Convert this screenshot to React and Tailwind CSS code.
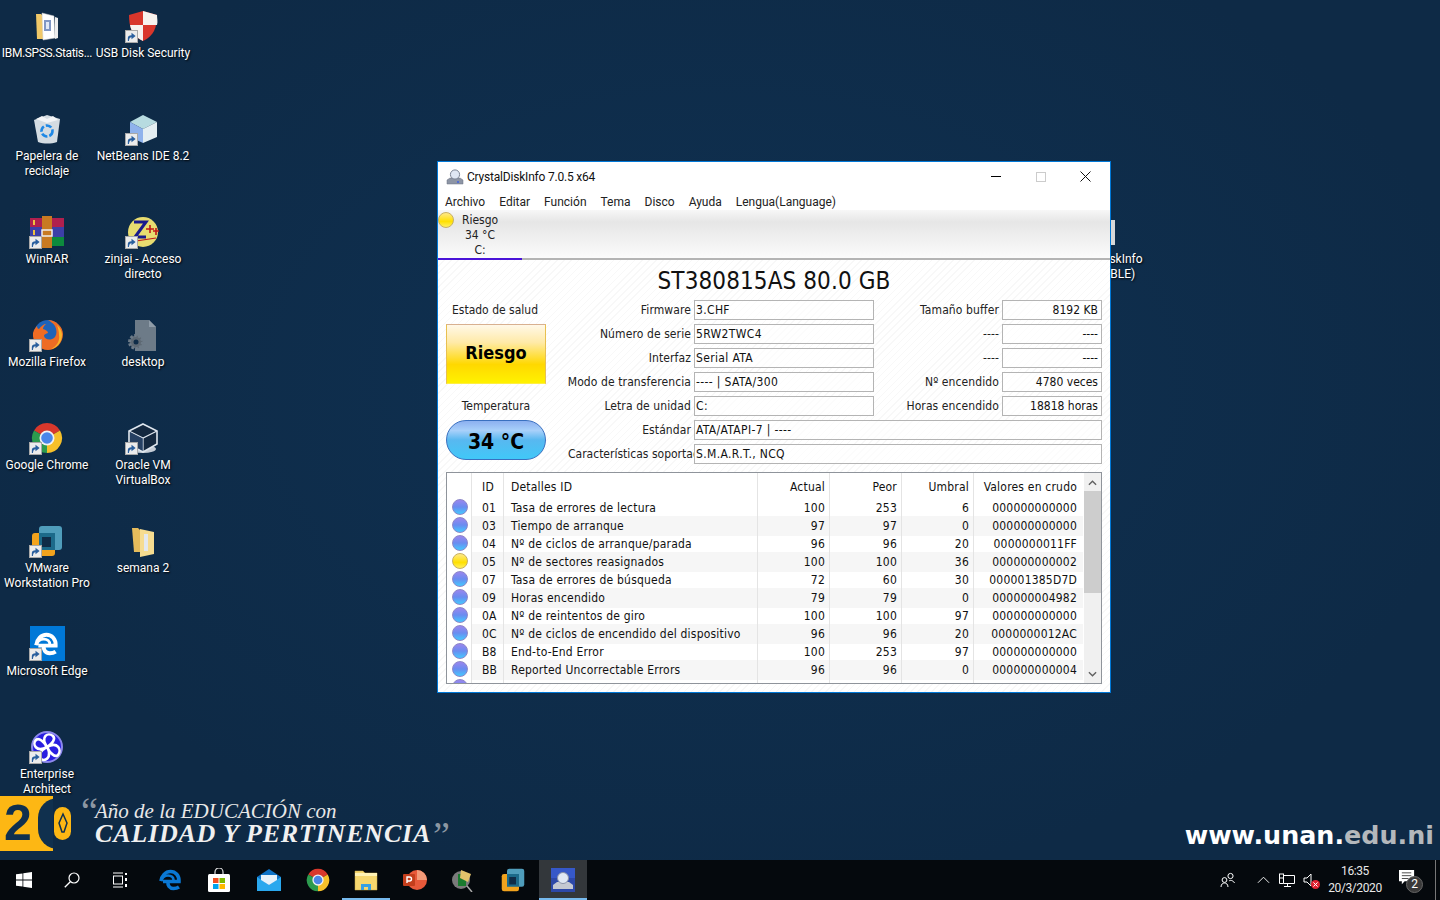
import React from "react";

const ui = "[font-family:'DejaVu_Sans_Condensed','Noto_Sans',sans-serif]";
const seg = "[font-family:'Roboto','Open_Sans',sans-serif]";

const Arrow = () => (
  <span className="absolute left-0 bottom-0 w-[13px] h-[13px] bg-[#ececec] border border-[#a8a8a8] flex items-center justify-center">
    <svg viewBox="0 0 12 12" className="w-[11px] h-[11px]"><path d="M2 11V7.500C2 5.500 3.500 4.500 6 4.500V2L10.500 5.500 6 9V6.800C4.500 6.800 3.500 7.500 3.200 11Z" fill="#2a5f9e" /></svg>
  </span>
);

const EdgeE = ({ s, c }) => (
  <svg viewBox="0 0 24 24" className={s}>
    <path d="M4 13.500h16c.3-6-3.500-10-8.500-10C6.500 3.500 2.500 8 2 13M9 13.500c-.5 4 1.500 7 5.500 7 2 0 4-.5 5.500-1.500" fill="none" stroke={c} strokeWidth="3.600" />
    <path d="M2 13c1-3 4-5.500 7-5.500 3.500 0 5.500 2 5.500 4.500" fill="none" stroke={c} strokeWidth="2.600" />
  </svg>
);

const FolderDoc = () => (
  <svg viewBox="0 0 32 32" className="w-8 h-8">
    <path d="M5 4h5l2 2v23H6z" fill="#f0c868" />
    <path d="M11 3l12 3 1 22-12 2z" fill="#fff" stroke="#cfcfcf" strokeWidth=".5" />
    <rect x="13" y="10" width="7" height="11" fill="#7f96c4" />
    <rect x="15" y="12" width="3" height="7" fill="#dfe7f5" />
    <path d="M24 7l3 1v20l-3 1z" fill="#eee" />
  </svg>
);
const Shield = () => (
  <svg viewBox="0 0 32 32" className="w-8 h-8">
    <path d="M16 1l14 4c0 12-3 21-14 26C5 26 2 17 2 5z" fill="#d9362b" />
    <path d="M16 1v14h14c1-3 0-7 0-10zM16 15H3c1 6 5 12 13 16z" fill="#f7f2ee" />
  </svg>
);
const Recycle = () => (
  <svg viewBox="0 0 32 32" className="w-8 h-8">
    <path d="M3 7l13-5 13 4-3 23c-6 2-13 2-19 0z" fill="#d4dce2" />
    <path d="M5 6l6-3 5 3 6-3 5 4-11 3z" fill="#f2f4f6" />
    <circle cx="16" cy="18" r="5.500" fill="none" stroke="#1e88e5" strokeWidth="2.600" strokeDasharray="6 2" />
  </svg>
);
const Cube = () => (
  <svg viewBox="0 0 32 32" className="w-8 h-8">
    <path d="M16 2l14 7-14 7L3 9z" fill="#b7dbe0" />
    <path d="M3 9l13 7v14L3 24z" fill="#8fb2ec" />
    <path d="M16 16l14-7v15l-14 6z" fill="#e4eef2" />
  </svg>
);
const WinRar = () => (
  <svg viewBox="0 0 36 32" className="w-9 h-8">
    <rect x="1" y="2" width="34" height="9" fill="#b0204e" />
    <rect x="1" y="11" width="34" height="10" fill="#3d3fa8" />
    <rect x="1" y="21" width="34" height="9" fill="#0d8a3d" />
    <rect x="4" y="4" width="2" height="5" fill="#f0c040" />
    <rect x="4" y="14" width="2" height="5" fill="#f0c040" />
    <rect x="13" y="0" width="10" height="32" fill="#c87a22" />
    <rect x="13" y="14" width="10" height="6" fill="none" stroke="#eee" strokeWidth="1.500" />
  </svg>
);
const Zinjai = () => (
  <svg viewBox="0 0 32 32" className="w-8 h-8">
    <circle cx="16" cy="16" r="15" fill="#e8dc70" />
    <path d="M7 6h12L8 21h11" fill="none" stroke="#1a1a8c" strokeWidth="3" />
    <path d="M19 13h8M23 9v8M26 15h6M29 12v7" stroke="#c01818" strokeWidth="1.600" />
    <path d="M9 25l20-3" stroke="#c01818" strokeWidth="1.200" />
  </svg>
);
const Firefox = () => (
  <svg viewBox="0 0 32 32" className="w-8 h-8">
    <circle cx="17" cy="15" r="14" fill="#1f63b8" />
    <path d="M17 1c8 0 15 7 15 14 0 9-7 16-15 16C8 31 1 23 2 14c1-4 3-6 4-7 0 2 1 3 2 3 2-3 5-5 7-5-2 2-3 3-3 5 3 1 5 2 5 4-2 1-4 1-4 3 1 4 7 5 11 1 2-3 2-7 0-11-2-3-4-4-7-6z" fill="#ee6c24" />
    <path d="M26 6c3 3 5 6 5 10 0 7-5 13-11 14 6-3 9-8 8-14 0-4-1-7-2-10z" fill="#f8b62a" />
  </svg>
);
const GearFile = () => (
  <svg viewBox="0 0 32 32" className="w-8 h-8">
    <path d="M8 1h14l7 7v24H8z" fill="#6d7b88" />
    <path d="M22 1l7 7h-7z" fill="#8f9ca8" />
    <circle cx="9" cy="23" r="6.500" fill="#5e6974" stroke="#6d7b88" strokeWidth="3" strokeDasharray="2.500 1.500" />
    <circle cx="9" cy="23" r="2.500" fill="#0f2c48" />
  </svg>
);
const Chrome = ({ s = "w-8 h-8" }) => (
  <svg viewBox="0 0 32 32" className={s}>
    <path d="M16 16L3 8.500A15 15 0 0 1 29 8.500Z" fill="#d8382c" />
    <path d="M16 16L29 8.500A15 15 0 0 1 16 31Z" fill="#f6c02a" />
    <path d="M16 16L16 31A15 15 0 0 1 3 8.500Z" fill="#2c9b4e" />
    <circle cx="16" cy="16" r="7.500" fill="#f2f2f2" />
    <circle cx="16" cy="16" r="5.800" fill="#4a86e8" />
  </svg>
);
const VBox = () => (
  <svg viewBox="0 0 32 32" className="w-8 h-8">
    <ellipse cx="16" cy="27" rx="13" ry="4" fill="#c4ccd6" />
    <path d="M16 2l14 7v13l-14 8-14-8V9z" fill="#14283f" stroke="#dfe6ee" strokeWidth="1.600" />
    <path d="M2 9l14 7 14-7M16 16v14" fill="none" stroke="#dfe6ee" strokeWidth="1.200" />
    <path d="M3 10l13 6.500V29L3 22z" fill="#2e4a72" opacity=".7" />
  </svg>
);
const VMware = ({ s = "w-8 h-8" }) => (
  <svg viewBox="0 0 32 32" className={s}>
    <rect x="8" y="1" width="23" height="24" rx="3" fill="#4f9dbb" />
    <rect x="1" y="8" width="23" height="23" rx="3" fill="#f2a31d" />
    <rect x="8" y="8" width="16" height="17" fill="#1c6a8a" />
    <rect x="11" y="12" width="9" height="10" fill="#0f2c48" />
  </svg>
);
const Folder = () => (
  <svg viewBox="0 0 32 32" className="w-8 h-8">
    <path d="M5 3h6l2 2v22H7z" fill="#e6bc5c" />
    <path d="M13 4l14 3v22l-14 3z" fill="#f6dc90" />
    <rect x="17" y="9" width="4" height="17" fill="#e4e8ee" />
  </svg>
);
const EdgeTile = () => (
  <div className="w-[35px] h-[35px] bg-[#0078d7] flex items-center justify-center">
    <EdgeE s="w-[26px] h-[26px]" c="#fff" />
  </div>
);
const EA = () => (
  <svg viewBox="0 0 34 34" className="w-[34px] h-[34px]">
    <circle cx="17" cy="17" r="15" fill="#2a1ee0" stroke="#8c88ec" strokeWidth="2" />
    <path d="M17 17C10 6 18 2 23 6c3 3-1 8-6 11zM17 17c11-6 15 3 11 8-3 3-8-2-11-8zM17 17C23 28 14 33 10 28c-3-3 2-8 7-11zM17 17C6 23 2 14 6 10c3-3 8 2 11 7z" fill="none" stroke="#fff" strokeWidth="2.600" />
  </svg>
);

const icons = [
  ["IBM.SPSS.Statis...", <FolderDoc />, false, "tracking-[-0.35px]"],
  ["USB Disk Security", <Shield />, true, "whitespace-nowrap"],
  ["Papelera de reciclaje", <Recycle />, false, ""],
  ["NetBeans IDE 8.2", <Cube />, true, "whitespace-nowrap"],
  ["WinRAR", <WinRar />, true, ""],
  ["zinjai - Acceso directo", <Zinjai />, true, ""],
  ["Mozilla Firefox", <Firefox />, true, ""],
  ["desktop", <GearFile />, false, ""],
  ["Google Chrome", <Chrome />, true, ""],
  ["Oracle VM VirtualBox", <VBox />, true, ""],
  ["VMware Workstation Pro", <VMware />, true, ""],
  ["semana 2", <Folder />, false, ""],
  ["Microsoft Edge", <EdgeTile />, true, ""],
  ["", null, false, ""],
  ["Enterprise Architect", <EA />, true, ""],
];

const DeskIcon = ({ label, icon, link, extra }) => (
  <div className={`flex flex-col items-center pt-[8px] text-white text-[12px] leading-[15px] text-center ${seg} [text-shadow:1px_1px_2px_#000]`}>
    <div className="relative w-[36px] h-[35px] flex items-center justify-center">
      {icon}
      {link && <Arrow />}
    </div>
    <div className={`mt-[3px] w-[96px] ${extra}`}>{label}</div>
  </div>
);

const Dot = ({ yellow }) => (
  <span className={`block w-[16px] h-[16px] rounded-full border ${yellow ? "border-[#c8b060] bg-[linear-gradient(#ffe98a,#ffe000_60%,#fff060)]" : "border-[#8c86c8] bg-[linear-gradient(#9a86ee,#6a8cf0_50%,#44c8ff)]"}`} />
);

const Field = ({ children, right, w = "w-[180px]" }) => (
  <div className={`h-[20px] ${w} shrink-0 border border-[#b4b4b4] bg-white/60 text-[12px] leading-[18px] text-[#111] whitespace-nowrap overflow-hidden ${right ? "text-right pr-[3px]" : "pl-[1px] tracking-[0.35px]"}`}>{children}</div>
);

const Label = ({ children, w = "w-[148px]" }) => (
  <div className={`${w} shrink-0 pr-[3px] text-right text-[12px] tracking-[0.1px] leading-[20px] text-[#222] whitespace-nowrap`}>{children}</div>
);

const rows3 = [
  ["Firmware", "3.CHF", "Tamaño buffer", "8192 KB"],
  ["Número de serie", "5RW2TWC4", "----", "----"],
  ["Interfaz", "Serial ATA", "----", "----"],
  ["Modo de transferencia", "---- | SATA/300", "Nº encendido", "4780 veces"],
  ["Letra de unidad", "C:", "Horas encendido", "18818 horas"],
];

const smart = [
  ["01", "Tasa de errores de lectura", "100", "253", "6", "000000000000"],
  ["03", "Tiempo de arranque", "97", "97", "0", "000000000000"],
  ["04", "Nº de ciclos de arranque/parada", "96", "96", "20", "0000000011FF"],
  ["05", "Nº de sectores reasignados", "100", "100", "36", "000000000002", true],
  ["07", "Tasa de errores de búsqueda", "72", "60", "30", "000001385D7D"],
  ["09", "Horas encendido", "79", "79", "0", "000000004982"],
  ["0A", "Nº de reintentos de giro", "100", "100", "97", "000000000000"],
  ["0C", "Nº de ciclos de encendido del dispositivo", "96", "96", "20", "0000000012AC"],
  ["B8", "End-to-End Error", "100", "253", "97", "000000000000"],
  ["BB", "Reported Uncorrectable Errors", "96", "96", "0", "000000000004"],
  ["", "", "", "", "", ""],
];

const cols = "grid grid-cols-[25px_32px_254px_72px_72px_72px_109px]";
const cell = "border-r border-[#e4e4e4] whitespace-nowrap overflow-hidden";

const SmartTable = () => (
  <div className="mt-[8px] h-[212px] w-[656px] border border-[#8f949b] flex overflow-hidden bg-white text-[12px] tracking-[0.2px] text-[#111]">
    <div className="w-[636px] shrink-0">
      <div className={`${cols} h-[25px] leading-[29px]`}>
        <div className={cell}></div>
        <div className={`${cell} pl-[10px]`}>ID</div>
        <div className={`${cell} pl-[7px]`}>Detalles ID</div>
        <div className={`${cell} text-right pr-[4px]`}>Actual</div>
        <div className={`${cell} text-right pr-[4px]`}>Peor</div>
        <div className={`${cell} text-right pr-[4px]`}>Umbral</div>
        <div className="text-right pr-[6px] whitespace-nowrap">Valores en crudo</div>
      </div>
      {smart.map((r, i) => (
        <div key={i} className={`${cols} h-[18px] leading-[20px]`}>
          <div className="border-r border-[#e4e4e4] pl-[5px] pt-[1px] bg-white"><Dot yellow={r[6]} /></div>
          <div className={`${cell} pl-[10px] ${i % 2 ? "bg-[#f6f6f6]" : ""}`}>{r[0]}</div>
          <div className={`${cell} pl-[7px] ${i % 2 ? "bg-[#f6f6f6]" : ""}`}>{r[1]}</div>
          <div className={`${cell} text-right pr-[4px] ${i % 2 ? "bg-[#f6f6f6]" : ""}`}>{r[2]}</div>
          <div className={`${cell} text-right pr-[4px] ${i % 2 ? "bg-[#f6f6f6]" : ""}`}>{r[3]}</div>
          <div className={`${cell} text-right pr-[4px] ${i % 2 ? "bg-[#f6f6f6]" : ""}`}>{r[4]}</div>
          <div className={`text-right pr-[6px] whitespace-nowrap ${i % 2 ? "bg-[#f6f6f6]" : ""}`}>{r[5]}</div>
        </div>
      ))}
    </div>
    <div className="w-[18px] ml-[1px] flex flex-col items-center bg-[#f0f0f0]">
      <svg viewBox="0 0 10 6" className="w-[9px] h-[6px] mt-[7px] mb-[5px]"><path d="M1 5l4-4 4 4" fill="none" stroke="#606060" strokeWidth="1.500" /></svg>
      <div className="w-full h-[102px] bg-[#cdcdcd]" />
      <div className="flex-1" />
      <svg viewBox="0 0 10 6" className="w-[9px] h-[6px] mb-[6px]"><path d="M1 1l4 4 4-4" fill="none" stroke="#606060" strokeWidth="1.500" /></svg>
    </div>
  </div>
);

const CrystalWindow = () => (
  <div className={`absolute left-[437px] top-[161px] w-[674px] h-[532px] border border-[#0078d7] bg-white flex flex-col ${ui}`}>
    <div className={`h-[28px] shrink-0 flex items-center pl-[8px] pt-[1px] text-[12px] text-[#111] ${seg}`}>
      <svg viewBox="0 0 18 18" className="w-[18px] h-[18px] mr-[3px]">
        <path d="M1 12l3-2h10l3 2v4H1z" fill="#8d95a5" stroke="#6a7080" strokeWidth=".5" />
        <circle cx="9" cy="6.500" r="4.600" fill="#dfe7f4" stroke="#7c8596" />
        <circle cx="12" cy="14" r="1" fill="#4060e0" />
      </svg>
      <span className="tracking-[-0.2px]">CrystalDiskInfo 7.0.5 x64</span>
      <div className="ml-auto flex items-center pr-[2px]">
        <div className="w-[45px] flex justify-center"><div className="w-[10px] h-[1px] bg-black" /></div>
        <div className="w-[45px] flex justify-center"><div className="w-[10px] h-[10px] border border-[#ccc]" /></div>
        <div className="w-[45px] flex justify-center">
          <svg viewBox="0 0 11 11" className="w-[11px] h-[11px]"><path d="M.5.5l10 10M10.500.5l-10 10" stroke="#111" /></svg>
        </div>
      </div>
    </div>
    <div className={`h-[20px] shrink-0 flex items-center gap-[14px] pl-[7px] pt-[4px] text-[12px] text-[#222] ${seg}`}>
      {["Archivo", "Editar", "Función", "Tema", "Disco", "Ayuda", "Lengua(Language)"].map((m) => <span key={m}>{m}</span>)}
    </div>
    <div className="h-[50px] shrink-0 bg-[linear-gradient(#f7f7f7,#e6e6e6_25%,#ededed_50%,#fbfbfb)] border-b-2 border-[#b4b4b4] relative">
      <div className="w-[84px] h-[50px] border-b-2 border-[#4a14d8] relative text-center text-[12px] leading-[15px] text-[#222] pt-[3px]">
        <span className="absolute left-0 top-[2px]"><Dot yellow /></span>
        <div>Riesgo</div>
        <div>34 °C</div>
        <div>C:</div>
      </div>
    </div>
    <div className="flex-1 pl-[8px] bg-[repeating-linear-gradient(135deg,#ffffff,#ffffff_4px,#f8f8f8_4px,#f8f8f8_5px)]">
      <div className="h-[40px] pr-[8px] text-center text-[24px] tracking-[0.1px] leading-[42px] text-[#111]">ST380815AS 80.0 GB</div>
      <div className="flex h-[164px]">
        <div className="w-[100px] shrink-0 flex flex-col items-center text-[12px] text-[#222]">
          <div className="leading-[20px] pr-[2px]">Estado de salud</div>
          <div className="mt-[4px] w-[100px] h-[60px] border border-[#d8b090] border-b-[#ffee44] border-x-[#e8c050] bg-[linear-gradient(#fff8e8,#ffeaa8_30%,#ffd800_68%,#fff200)] flex items-center justify-center pb-[3px] text-[18px] font-bold text-black">Riesgo</div>
          <div className="mt-[12px] leading-[20px]">Temperatura</div>
          <div className="mt-[4px] w-[100px] h-[40px] rounded-[20px] border border-[#3a70c0] bg-[linear-gradient(#8cb0f0,#a8d0fa_25%,#58b8f0_50%,#40c8f8)] flex items-center justify-center pt-[5px] text-[21px] font-bold text-black">34 °C</div>
        </div>
        <div className="flex flex-col gap-[4px]">
          {rows3.map((r) => (
            <div key={r[0]} className="flex">
              <Label>{r[0]}</Label>
              <Field>{r[1]}</Field>
              <Label w="w-[128px]">{r[2]}</Label>
              <Field right w="w-[100px]">{r[3]}</Field>
            </div>
          ))}
          <div className="flex">
            <Label>Estándar</Label>
            <Field w="w-[408px]">ATA/ATAPI-7 | ----</Field>
          </div>
          <div className="flex">
            <div className="w-[148px] shrink-0 pl-[22px] text-[12px] leading-[20px] text-[#222] whitespace-nowrap overflow-hidden">Características soportadas</div>
            <Field w="w-[408px]">S.M.A.R.T., NCQ</Field>
          </div>
        </div>
      </div>
      <SmartTable />
    </div>
  </div>
);

const Banner = () => (
  <div className="absolute left-0 top-[796px] w-[460px] h-[60px]">
    <div className="absolute left-0 top-0 w-[53px] h-[55px] bg-[#fdb714] overflow-hidden">
      <span className="absolute left-[4px] top-[-2px] text-[50px] leading-[58px] font-bold text-[#10304e] [font-family:'Liberation_Sans',sans-serif]">2</span>
      <span className="absolute left-[38px] top-[2px] w-[40px] h-[51px] rounded-full bg-[#10304e]"></span>
    </div>
    <span className="absolute left-[54px] top-[11px] w-[17px] h-[33px] rounded-full bg-[#fdb714] flex items-center justify-center">
      <svg viewBox="0 0 12 24" className="w-[12px] h-[24px]"><path d="M6 2l4 9-3 9H5L2 11z" fill="none" stroke="#10304e" strokeWidth="1.500" /></svg>
    </span>
    <span className="absolute left-[81px] top-[-9px] text-[38px] leading-[48px] text-[#8c97a3] [font-family:'Liberation_Serif',serif]">“</span>
    <span className="absolute left-[95px] top-[2px] text-[21px] leading-[26px] italic text-[#e8e8e8] whitespace-nowrap [font-family:'Liberation_Serif',serif]">Año de la EDUCACIÓN con</span>
    <span className="absolute left-[95px] top-[23px] text-[26px] tracking-[0.8px] leading-[30px] italic font-bold text-[#f0f0f0] whitespace-nowrap [font-family:'Liberation_Serif',serif]">CALIDAD Y PERTINENCIA</span>
    <span className="absolute left-[433px] top-[15px] text-[38px] leading-[48px] text-[#8c97a3] [font-family:'Liberation_Serif',serif]">”</span>
  </div>
);

const TaskIcon = ({ children, active, open, gap = "" }) => (
  <div className={`w-[48px] h-[40px] relative flex items-center justify-center ${gap} ${active ? "bg-[#33373b]" : ""}`}>
    {children}
    {open && <div className="absolute left-0 right-0 bottom-0 h-[2px] bg-[#76b9ed]" />}
  </div>
);

const Taskbar = () => (
  <div className="h-[40px] shrink-0 bg-[#05090d] flex items-center text-white">
    <TaskIcon>
      <svg viewBox="0 0 16 16" className="w-[16px] h-[16px]"><path d="M0 2.300l6.500-.9v6.200H0zM7.300 1.300L16 0v7.600H7.300zM0 8.400h6.500v6.200L0 13.700zM7.300 8.400H16V16l-8.700-1.200z" fill="#fff" /></svg>
    </TaskIcon>
    <TaskIcon>
      <svg viewBox="0 0 16 16" className="w-[16px] h-[16px]"><circle cx="10" cy="6" r="5" fill="none" stroke="#fff" strokeWidth="1.200" /><path d="M6.300 9.700L.8 15.200" stroke="#fff" strokeWidth="1.300" /></svg>
    </TaskIcon>
    <TaskIcon>
      <svg viewBox="0 0 16 16" className="w-[16px] h-[16px]"><path d="M1 1h10M1 15h10" stroke="#fff" /><rect x="1.500" y="4" width="9" height="8" fill="none" stroke="#fff" /><path d="M14 1v2M14 6v3M14 12v3" stroke="#fff" strokeWidth="2" /></svg>
    </TaskIcon>
    <TaskIcon gap="ml-[3px]"><EdgeE s="w-[24px] h-[24px]" c="#0a78d4" /></TaskIcon>
    <TaskIcon>
      <svg viewBox="0 0 24 24" className="w-[24px] h-[24px]">
        <path d="M8 7V4a4 4 0 0 1 8 0v3" fill="none" stroke="#ddd" strokeWidth="1.200" />
        <rect x="1" y="6" width="22" height="18" rx="1.500" fill="#fff" />
        <rect x="6" y="10" width="5.500" height="5" fill="#f25022" /><rect x="12.500" y="10" width="5.500" height="5" fill="#7fba00" />
        <rect x="6" y="16" width="5.500" height="5" fill="#00a4ef" /><rect x="12.500" y="16" width="5.500" height="5" fill="#ffb900" />
      </svg>
    </TaskIcon>
    <TaskIcon gap="ml-[2px]">
      <svg viewBox="0 0 24 24" className="w-[24px] h-[24px]">
        <path d="M0 9L12 1l12 8v14H0z" fill="#0d72c6" /><path d="M0 9l12 8 12-8v14H0z" fill="#2aa8ee" /><path d="M4 7h16v5l-8 5-8-5z" fill="#e6f2fb" />
      </svg>
    </TaskIcon>
    <TaskIcon gap="ml-[1px]"><Chrome s="w-[24px] h-[24px]" /></TaskIcon>
    <TaskIcon open>
      <svg viewBox="0 0 24 24" className="w-[24px] h-[24px]">
        <path d="M1 3h8l2 2h12v17H1z" fill="#f6d76e" stroke="#c9a94a" strokeWidth=".5" /><path d="M1 5h22v3H1z" fill="#fff2b4" />
        <path d="M7 22v-6h10v6h-3v-3h-4v3z" fill="#35a0e4" />
      </svg>
    </TaskIcon>
    <TaskIcon gap="ml-[1px]">
      <svg viewBox="0 0 24 24" className="w-[24px] h-[24px]">
        <circle cx="14" cy="12" r="10" fill="#e8593a" /><path d="M14 2a10 10 0 0 1 10 10H14z" fill="#f39a78" />
        <rect x="0" y="6" width="12" height="12" rx="1" fill="#c43e1c" /><path d="M4 15V9h2.500a2 2 0 0 1 0 4H4" fill="none" stroke="#fff" strokeWidth="1.400" />
      </svg>
    </TaskIcon>
    <TaskIcon gap="ml-[1px]">
      <svg viewBox="0 0 24 24" className="w-[24px] h-[24px]">
        <circle cx="9" cy="12" r="9" fill="#7a7a7a" /><rect x="6" y="6" width="8" height="12" fill="#1a7a2e" /><path d="M9 2l10 4-3 8-8-4z" fill="#e3c26b" /><path d="M15 18l5 6" stroke="#aaa" strokeWidth="1.500" />
      </svg>
    </TaskIcon>
    <TaskIcon gap="ml-[1px]"><VMware s="w-[24px] h-[24px]" /></TaskIcon>
    <TaskIcon active open gap="ml-[2px]">
      <svg viewBox="0 0 24 24" className="w-[24px] h-[24px]">
        <rect x="0" y="0" width="24" height="24" fill="#2d48a8" /><path d="M0 0h24v10H0z" fill="#3658c8" />
        <path d="M2 17l4-3h12l4 3v4H2z" fill="#c4c8d2" /><circle cx="12" cy="10" r="5.500" fill="#dfe7f4" stroke="#8a92a8" />
      </svg>
    </TaskIcon>
    <div className="ml-auto flex items-center h-full">
      <svg viewBox="0 0 16 16" className="w-[16px] h-[16px] mr-[21px]">
        <circle cx="10.500" cy="4" r="2.600" fill="none" stroke="#fff" /><circle cx="4.500" cy="8" r="2.400" fill="none" stroke="#fff" /><path d="M1 15c0-3 2-4 3.500-4S8 12 8 15M9 9c1-1 4-1 5.500 2" fill="none" stroke="#fff" />
      </svg>
      <svg viewBox="0 0 14 8" className="w-[13px] h-[8px] mr-[9px]"><path d="M1 7l6-6 6 6" fill="none" stroke="#fff" /></svg>
      <svg viewBox="0 0 16 16" className="w-[16px] h-[16px] mr-[8px]"><rect x=".5" y="2" width="4" height="4" fill="none" stroke="#fff" /><path d="M4.500 3.500h11v8h-11V6M.5 6v5.500h4M5 14.500h7M8.500 11.500v3" fill="none" stroke="#fff" /></svg>
      <div className="relative w-[16px] h-[16px] mr-[2px]">
        <svg viewBox="0 0 16 16" className="w-[16px] h-[16px]"><path d="M1 6h3l4-4v12l-4-4H1z" fill="none" stroke="#fff" /></svg>
        <span className="absolute right-[-1px] bottom-[-1px] w-[9px] h-[9px] rounded-full bg-[#e02030] flex items-center justify-center">
          <svg viewBox="0 0 6 6" className="w-[5px] h-[5px]"><path d="M.5.5l5 5M5.500.5l-5 5" stroke="#fff" strokeWidth="1.200" /></svg>
        </span>
      </div>
      <div className={`w-[68px] text-center text-[12px] leading-[17px] tracking-[-0.4px] text-[#e8e8e8] ${seg}`}>
        <div>16:35</div>
        <div>20/3/2020</div>
      </div>
      <div className="relative w-[24px] h-[24px] ml-[7px] mr-[15px]">
        <svg viewBox="0 0 18 18" className="absolute left-[3px] top-[2px] w-[17px] h-[17px]"><path d="M0 0h16v12H6l-3 3v-3H0z" fill="#fff" /><path d="M3 3h10M3 6h10M3 9h7" stroke="#444" /></svg>
        <span className={`absolute left-[10px] top-[8px] w-[17px] h-[17px] rounded-full bg-[#3a3a3a] border border-[#666] text-[12px] leading-[15px] text-center text-white ${seg}`}>2</span>
      </div>
      <div className="w-[5px] h-full border-l border-[#777]" />
    </div>
  </div>
);

export default function App() {
  return (
    <div className="relative w-[1440px] h-[900px] overflow-hidden flex flex-col bg-[#0f2c48]">
      <div className="relative flex-1 bg-[radial-gradient(ellipse_at_50%_45%,#0f3152,#0e2a46_75%)]">
        <div className="ml-[-1px] grid grid-cols-[96px_96px] auto-rows-[103px] w-[192px]">
          {icons.map(([l, ic, k, ex], i) => <DeskIcon key={i} label={l} icon={ic} link={k} extra={ex} />)}
        </div>
        <Banner />
        <div className={`absolute left-[1054px] top-[214px] w-[96px] text-center text-white text-[12px] leading-[15px] ${seg} [text-shadow:1px_1px_2px_#000]`}>
          <div className="ml-[57px] w-[4px] h-[25px] mt-[6px] bg-[#d8d8d8]" />
          <div className="mt-[7px]">CrystalDiskInfo</div>
          <div>(PORTABLE)</div>
        </div>
        <div className="absolute right-[6px] top-[818px] text-[25.4px] leading-[34px] font-bold text-white whitespace-nowrap [font-family:'DejaVu_Sans',sans-serif]">www.unan.<span className="text-[#b4b8bc]">edu.ni</span></div>
      </div>
      <Taskbar />
      <CrystalWindow />
    </div>
  );
}
